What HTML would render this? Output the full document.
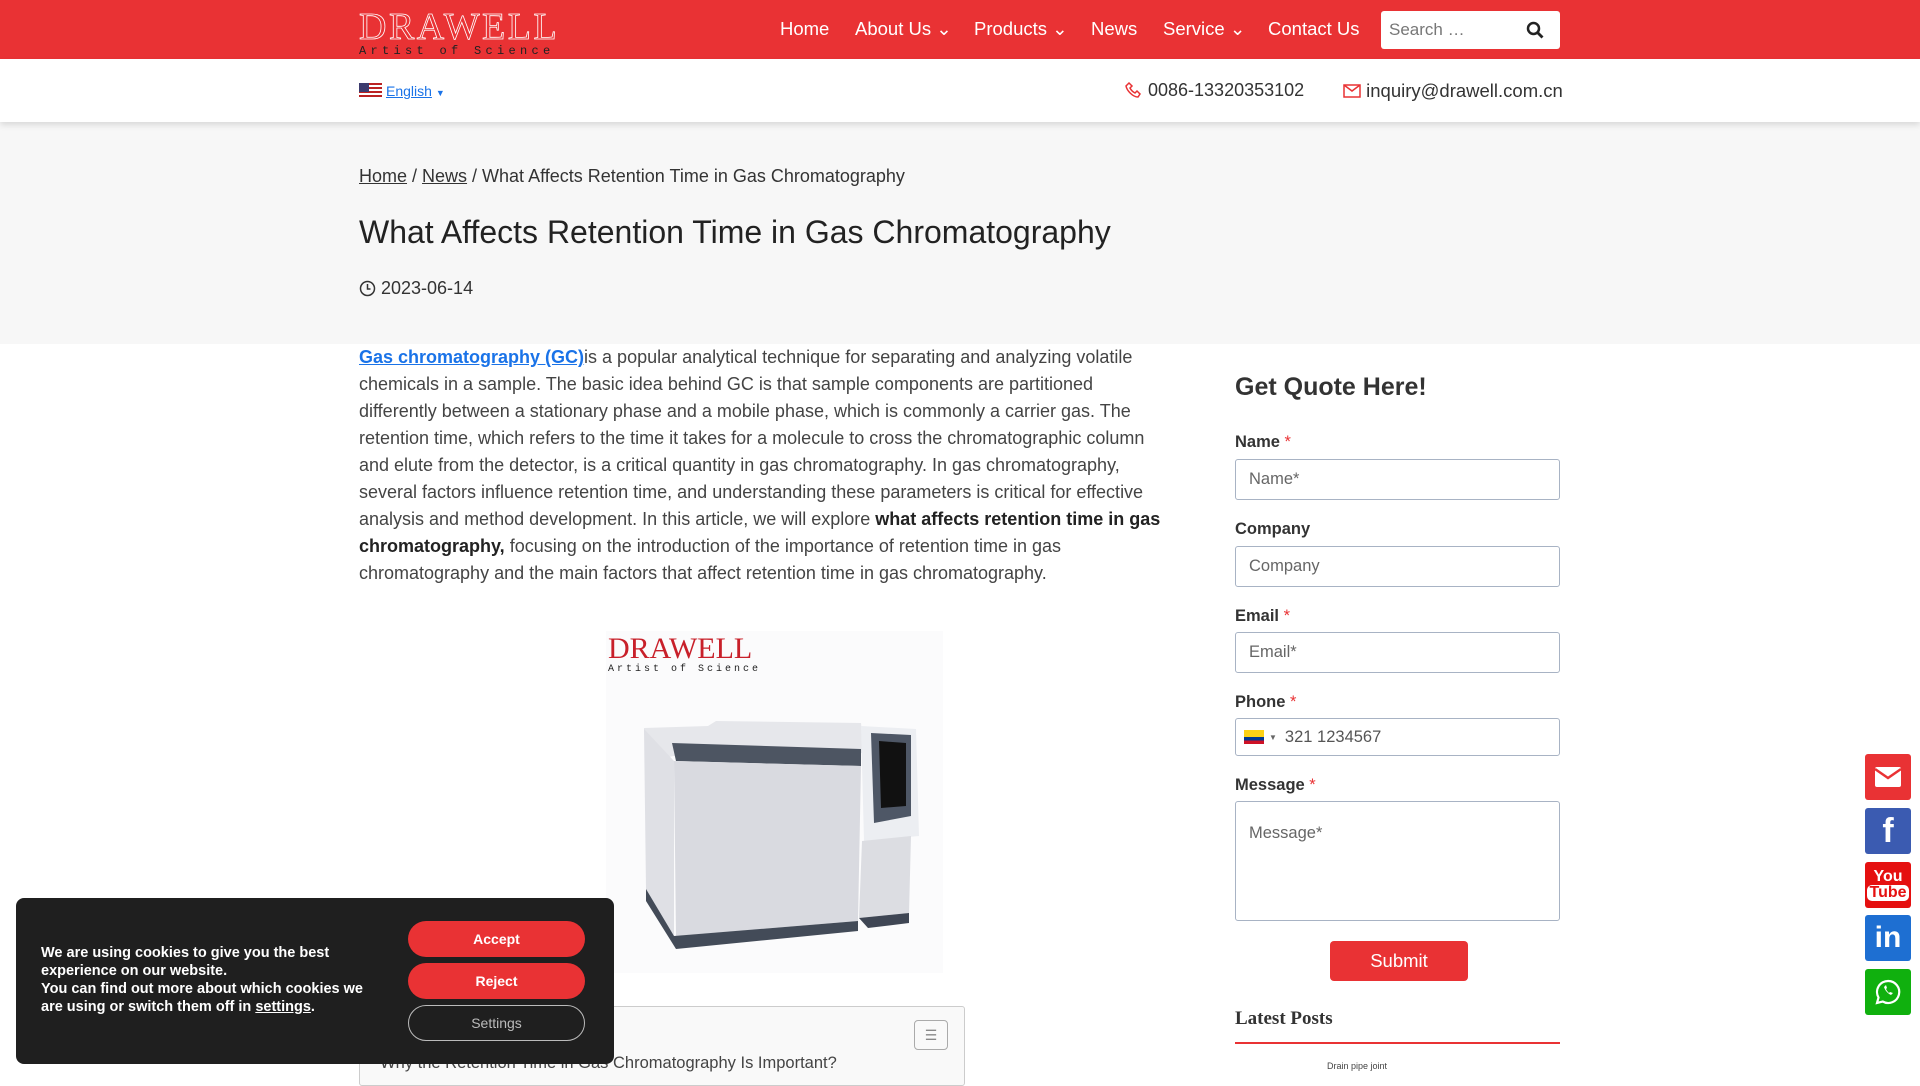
<!DOCTYPE html>
<html><head><meta charset="utf-8"><style>
*{box-sizing:border-box;margin:0;padding:0}
body{width:1920px;height:1080px;overflow:hidden;font-family:"Liberation Sans",sans-serif;background:#fff;color:#333;position:relative}
.hdr{position:absolute;left:0;top:0;width:1920px;height:59px;background:#e93234}
.logo{position:absolute;left:359px;top:10px;color:#fff;font-family:"Liberation Serif",serif}
.logo .big{font-size:38px;letter-spacing:2.5px;line-height:34px;-webkit-text-stroke:0.8px #fff;color:transparent}
.logo .sm{font-family:"Liberation Mono",monospace;font-size:12px;color:#222;letter-spacing:4.3px;line-height:12px;margin-top:1px}
.nav{position:absolute;top:18px;font-size:18.5px;color:#fff}
.nav span{position:absolute;white-space:nowrap}
.search{position:absolute;left:1381px;top:11px;width:179px;height:38px;background:#fff;border-radius:3px;font-size:17px;color:#777;padding:9px 8px}
.bar2{position:absolute;top:59px;left:0;width:1920px;height:63px;background:#fff;box-shadow:0 3px 6px rgba(0,0,0,.12);z-index:2}
.gray{position:absolute;top:122px;left:0;width:1920px;height:222px;background:#f7f7f7}
.abs{position:absolute;white-space:nowrap}
a{color:#333}
.body{position:absolute;left:359px;top:344px;width:810px;font-size:18px;line-height:27px;color:#444}
.lab{position:absolute;left:1235px;font-size:16.5px;font-weight:bold;color:#333}
.lab i{color:#e93234;font-style:normal;font-weight:normal}
.inp{position:absolute;left:1235px;width:325px;border:1px solid #a8b3c4;border-radius:3px;font-size:16.5px;color:#666;padding:0 13px;display:flex;align-items:center;background:#fff}
.soc{position:absolute;left:1865px;width:46px;height:46px;border-radius:3px;display:flex;align-items:center;justify-content:center}
.ck{position:absolute;left:16px;top:898px;width:598px;height:166px;background:#1f1f1f;border-radius:8px;z-index:5}
.btn{position:absolute;left:392px;width:177px;height:36px;border-radius:18px;color:#fff;font-size:14px;display:flex;align-items:center;justify-content:center;font-weight:bold}
</style></head><body>
<div class="hdr">
 <div class="logo"><div class="big">DRAWELL</div><div class="sm">Artist of Science</div></div>
 <div class="nav">
  <span style="left:780px">Home</span>
  <span style="left:855px">About Us ⌄</span>
  <span style="left:974px">Products ⌄</span>
  <span style="left:1091px">News</span>
  <span style="left:1163px">Service ⌄</span>
  <span style="left:1268px">Contact Us</span>
 </div>
 <div class="search">Search …
  <svg style="position:absolute;right:16px;top:10px" width="18" height="18" viewBox="0 0 18 18"><circle cx="7.5" cy="7.5" r="5.5" fill="none" stroke="#222" stroke-width="2.5"/><path d="M11.5 11.5l5 5" stroke="#222" stroke-width="2.8"/></svg></div>
</div>
<div class="bar2">
 <div class="abs" style="left:359px;top:24px;font-size:14px;color:#1a73e8"><svg width="23" height="16" viewBox="0 0 23 16" style="vertical-align:-3px;margin-right:4px"><rect width="23" height="16" fill="#b22"/><g fill="#fff"><rect y="2" width="23" height="2"/><rect y="6" width="23" height="2"/><rect y="10" width="23" height="2"/><rect y="14" width="23" height="2"/></g><rect width="10" height="9" fill="#3c3b6e"/></svg><u>English</u> <span style="font-size:9px">▼</span></div>
 <div class="abs" style="left:1125px;top:21px;font-size:18px;color:#333"><svg width="18" height="18" viewBox="0 0 18 18" style="vertical-align:-3px"><path d="M4 2l3 3-2 2c1 2 3 4 5 5l2-2 3 3-2 3C8 16 2 10 1 5z" fill="none" stroke="#e93234" stroke-width="1.5"/></svg> 0086-13320353102</div>
 <div class="abs" style="left:1343px;top:21px;font-size:18.5px;color:#333"><svg width="18" height="14" viewBox="0 0 18 14" style="vertical-align:-1px"><rect x="1" y="1" width="16" height="12" fill="none" stroke="#e93234" stroke-width="1.5"/><path d="M1 1l8 6 8-6" fill="none" stroke="#e93234" stroke-width="1.5"/></svg> inquiry@drawell.com.cn</div>
</div>
<div class="gray"></div>
<div class="abs" style="left:359px;top:166px;font-size:18px;color:#333"><u>Home</u> / <u>News</u> / What Affects Retention Time in Gas Chromatography</div>
<div class="abs" style="left:359px;top:214px;font-size:32px;color:#222">What Affects Retention Time in Gas Chromatography</div>
<div class="abs" style="left:359px;top:278px;font-size:18px;color:#333"><svg width="17" height="17" viewBox="0 0 17 17" style="vertical-align:-3px"><circle cx="8.5" cy="8.5" r="7" fill="none" stroke="#333" stroke-width="1.5"/><path d="M8.5 4v5h3" fill="none" stroke="#333" stroke-width="1.5"/></svg> 2023-06-14</div>
<div class="body"><a style="color:#1a73e8;font-weight:bold" href="#">Gas chromatography (GC)</a>is a popular analytical technique for separating and analyzing volatile chemicals in a sample. The basic idea behind GC is that sample components are partitioned differently between a stationary phase and a mobile phase, which is commonly a carrier gas. The retention time, which refers to the time it takes for a molecule to cross the chromatographic column and elute from the detector, is a critical quantity in gas chromatography. In gas chromatography, several factors influence retention time, and understanding these parameters is critical for effective analysis and method development. In this article, we will explore <b style="color:#222">what affects retention time in gas chromatography,</b> focusing on the introduction of the importance of retention time in gas chromatography and the main factors that affect retention time in gas chromatography.</div>
<div style="position:absolute;left:606px;top:631px;width:337px;height:342px;background:#fbfbfc">
 <div style="position:absolute;left:2px;top:4px;font-family:'Liberation Serif',serif;font-size:30px;color:#c8202a;line-height:28px">DRAWELL</div>
 <div style="position:absolute;left:2px;top:33px;font-family:'Liberation Mono',monospace;font-size:10px;color:#222;letter-spacing:3px">Artist of Science</div>
 <svg style="position:absolute;left:0;top:0" width="337" height="342" viewBox="0 0 337 342">
  <path d="M38 97 L102 95 L110 90 L255 92 L258 122 L68 125 L40 130 Z" fill="#e6e7eb"/>
  <path d="M66 112 L255 118 L255 135 L70 130 Z" fill="#4d5562"/>
  <path d="M38 98 L68 130 L68 305 L40 258 Z" fill="#dfe0e5"/>
  <path d="M68 130 L255 135 L252 290 L70 305 Z" fill="#d9dae0"/>
  <path d="M40 258 L68 305 L252 290 L252 300 L70 318 L40 270 Z" fill="#434b58"/>
  <path d="M255 95 L310 98 L313 205 L258 210 Z" fill="#eceef2"/>
  <path d="M265 102 L305 104 L305 185 L268 192 Z" fill="#4e5766"/>
  <path d="M273 110 L300 112 L300 175 L275 177 Z" fill="#111"/>
  <path d="M256 210 L305 205 L303 282 L253 287 Z" fill="#dcdde2"/>
  <path d="M253 287 L303 282 L303 292 L262 297 Z" fill="#3f4654"/>
 </svg>
</div>
<div style="position:absolute;left:359px;top:1006px;width:606px;height:80px;border:1px solid #ccc;border-radius:3px;background:#f9f9f9">
 <div style="position:absolute;right:16px;top:13px;width:34px;height:30px;border:1px solid #aaa;border-radius:4px;font-size:14px;color:#888;text-align:center;line-height:28px">☰</div>
 <div class="abs" style="left:10px;top:47px;font-size:16.5px;color:#444">- Why the Retention Time in Gas Chromatography Is Important?</div>
</div>
<div class="ck">
 <div class="abs" style="left:25px;top:46px;font-size:14.5px;line-height:18px;color:#fff;font-weight:bold">We are using cookies to give you the best<br>experience on our website.<br>You can find out more about which cookies we<br>are using or switch them off in <u>settings</u>.</div>
 <div class="btn" style="top:23px;background:#e93234">Accept</div>
 <div class="btn" style="top:65px;background:#e93234">Reject</div>
 <div class="btn" style="top:107px;border:1px solid #bbb;color:#bbb;font-weight:normal">Settings</div>
</div>
<div class="abs" style="left:1235px;top:373px;font-size:25px;font-weight:bold;color:#333">Get Quote Here!</div>
<div class="lab" style="top:433px">Name <i>*</i></div>
<div class="inp" style="top:459px;height:41px">Name*</div>
<div class="lab" style="top:520px">Company</div>
<div class="inp" style="top:546px;height:41px">Company</div>
<div class="lab" style="top:607px">Email <i>*</i></div>
<div class="inp" style="top:632px;height:41px">Email*</div>
<div class="lab" style="top:693px">Phone <i>*</i></div>
<div class="inp" style="top:718px;height:38px;padding-left:8px"><svg width="20" height="14" viewBox="0 0 20 14"><rect width="20" height="7" fill="#fcd116"/><rect y="7" width="20" height="3.5" fill="#003893"/><rect y="10.5" width="20" height="3.5" fill="#ce1126"/></svg><span style="font-size:8px;margin:0 8px 0 5px">▼</span><span style="color:#555">321 1234567</span></div>
<div class="lab" style="top:776px">Message <i>*</i></div>
<div class="inp" style="top:801px;height:120px;align-items:flex-start;padding-top:22px">Message*</div>
<div style="position:absolute;left:1330px;top:941px;width:138px;height:40px;background:#e93234;border-radius:4px;color:#fff;font-size:18.5px;display:flex;align-items:center;justify-content:center">Submit</div>
<div class="abs" style="left:1235px;top:1008px;font-family:'Liberation Serif',serif;font-size:19px;font-weight:bold;color:#333">Latest Posts</div>
<div style="position:absolute;left:1235px;top:1042px;width:325px;height:2px;background:#e93234"></div>
<div class="abs" style="left:1327px;top:1061px;font-size:9px;color:#444">Drain pipe joint</div>
<div class="soc" style="top:754px;background:#e93234"><svg width="26" height="20" viewBox="0 0 26 20"><rect width="26" height="20" rx="2" fill="#fff"/><path d="M0 2l13 9 13-9" fill="none" stroke="#e93234" stroke-width="2.5"/></svg></div>
<div class="soc" style="top:808px;background:#3b5bb1;color:#fff;font-size:34px;font-weight:bold">f</div>
<div class="soc" style="top:862px;background:#e51010;color:#fff;font-size:16px;font-weight:bold;line-height:16px;flex-direction:column">You<span style="background:#fff;color:#e51010;border-radius:5px;padding:0 2px">Tube</span></div>
<div class="soc" style="top:915px;background:#1e6fd2;color:#fff;font-size:30px;font-weight:bold">in</div>
<div class="soc" style="top:969px;background:#10b00e"><svg width="28" height="28" viewBox="0 0 28 28"><path d="M14 3a11 11 0 0 0-9.5 16.5L3 25l5.7-1.5A11 11 0 1 0 14 3z" fill="none" stroke="#fff" stroke-width="2.2"/><path d="M10 9c1 3 3 6 7 8l2-2-3-1-1 1c-1-1-2-2-3-4l1-1-1-3z" fill="#fff"/></svg></div>
</body></html>
